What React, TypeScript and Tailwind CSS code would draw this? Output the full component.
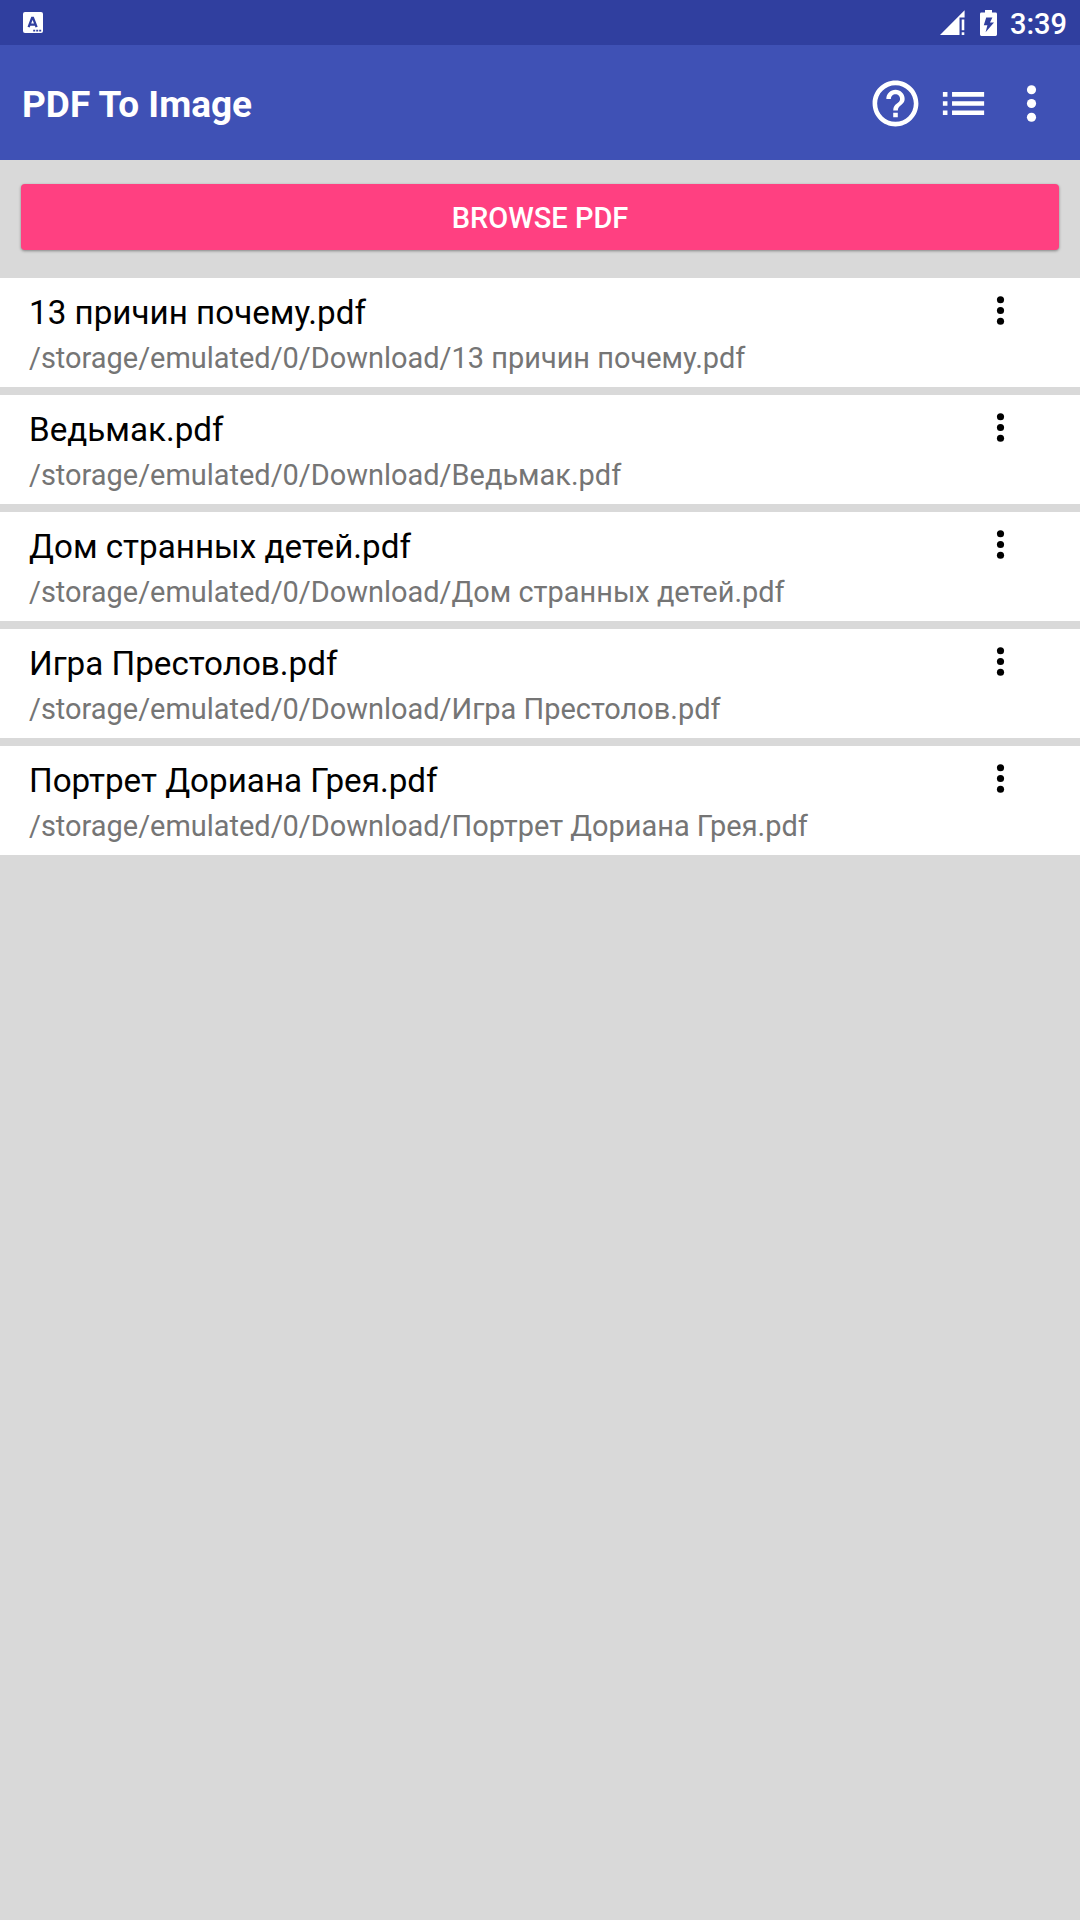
import React from 'react';

interface PdfFile {
  name: string;
}

const DOWNLOAD_DIR = '/storage/emulated/0/Download/';

const files: PdfFile[] = [
  { name: '13 причин почему.pdf' },
  { name: 'Ведьмак.pdf' },
  { name: 'Дом странных детей.pdf' },
  { name: 'Игра Престолов.pdf' },
  { name: 'Портрет Дориана Грея.pdf' },
];

const MoreIcon: React.FC<{ className: string }> = ({ className }) => (
  <svg viewBox="0 0 24 24" fill="currentColor" className={className}>
    <circle cx="12" cy="6" r="2" />
    <circle cx="12" cy="12" r="2" />
    <circle cx="12" cy="18" r="2" />
  </svg>
);

const HelpIcon: React.FC = () => (
  <svg viewBox="0 0 24 24" fill="currentColor" className="w-[55px] h-[55px]">
    <path d="M11 18h2v-2h-2v2zm1-16C6.48 2 2 6.48 2 12s4.48 10 10 10 10-4.48 10-10S17.52 2 12 2zm0 18c-4.41 0-8-3.59-8-8s3.59-8 8-8 8 3.59 8 8-3.59 8-8 8zm0-14c-2.21 0-4 1.79-4 4h2c0-1.1.9-2 2-2s2 .9 2 2c0 2-3 1.75-3 5h2c0-2.25 3-2.5 3-5 0-2.21-1.79-4-4-4z" />
  </svg>
);

const ListIcon: React.FC = () => (
  <svg viewBox="0 0 24 24" fill="currentColor" className="w-[55px] h-[55px]">
    <path d="M3 13h2v-2H3v2zm0 4h2v-2H3v2zm0-8h2V7H3v2zm4 4h14v-2H7v2zm0 4h14v-2H7v2zM7 7v2h14V7H7z" />
  </svg>
);

const StatusBar: React.FC = () => (
  <div className="flex h-[45px] items-center justify-between bg-[#303f9f] pl-[23px] pr-[13px] text-white">
    {/* Keyboard notification */}
    <div className="flex h-[21px] w-5 justify-center rounded-[2px] bg-white">
      <svg viewBox="0 0 20 21" className="h-[21px] w-5" fill="none">
        <path d="M5.6 15.2 9.1 5.8h.9L13.6 15.2M7 12.6h5.2" stroke="#303f9f" strokeWidth="2.3" />
        <path d="M10.2 17.8h2v1.8h-2zM13.2 17.8h2v1.8h-2zM16.2 17.8h2v1.8h-2z" fill="#303f9f" />
      </svg>
    </div>

    <div className="flex items-center">
      <svg viewBox="0 0 26 26" className="h-[26px] w-[26px]" fill="currentColor">
        <path d="M0 25 24.6 .2V7.5H19.5V25z" />
        <path d="M21.7 9.5h2.6v10.7h-2.6zM21.7 22.2h2.6V25h-2.6z" />
      </svg>
      <svg viewBox="0 0 17 26" className="ml-[14px] h-[26px] w-[17px]" fill="currentColor">
        <path
          fillRule="evenodd"
          d="M5 0h7v2.5h3.6Q17 2.5 17 3.9v20.7Q17 26 15.6 26H1.4Q0 26 0 24.6V3.9Q0 2.5 1.4 2.5H5zM6.2 7.5 3.8 15.2H7.4L5.6 22.2 14 12.4H10L12.4 7.5z"
        />
      </svg>
      <span className="ml-[13px] pt-[3px] text-[29px] font-medium leading-[42px]">3:39</span>
    </div>
  </div>
);

const Toolbar: React.FC = () => (
  <header className="flex h-[115px] items-center justify-between bg-[#3f51b5] pl-[22px] pr-[21px] text-white">
    <h1 className="pt-[3px] text-[37px] font-bold leading-none">PDF To Image</h1>
    <div className="flex items-center gap-[13px] pt-px">
      <button type="button" aria-label="Help">
        <HelpIcon />
      </button>
      <button type="button" aria-label="List">
        <ListIcon />
      </button>
      <button type="button" aria-label="More options">
        <MoreIcon className="w-[55px] h-[55px]" />
      </button>
    </div>
  </header>
);

const FileRow: React.FC<{ file: PdfFile }> = ({ file }) => (
  <li className="flex h-[109px] items-start justify-between bg-white pl-[29px] pr-[58px]">
    <div className="pt-[15px]">
      <p className="text-[33.2px] leading-[39px] text-black">{file.name}</p>
      <p className="mt-[9px] text-[28.95px] leading-[34px] text-[#757575]">
        {DOWNLOAD_DIR}
        {file.name}
      </p>
    </div>
    <button type="button" aria-label="File options" className="mt-[11px] text-black">
      <MoreIcon className="w-[43px] h-[43px]" />
    </button>
  </li>
);

const App: React.FC = () => {
  return (
    <div className="min-h-screen w-full bg-[#d9d9d9] font-[Roboto,sans-serif]">
      <StatusBar />
      <Toolbar />
      <div className="px-[21px] pt-6 pb-7">
        <button
          type="button"
          className="block h-[66px] w-full rounded-[4px] bg-[#ff4081] pt-[3px] text-[29px] font-medium text-white shadow-[0_1px_3px_rgba(0,0,0,0.4)]"
        >
          BROWSE PDF
        </button>
      </div>
      <ul className="flex flex-col gap-2">
        {files.map((file) => (
          <FileRow key={file.name} file={file} />
        ))}
      </ul>
    </div>
  );
};

export default App;
